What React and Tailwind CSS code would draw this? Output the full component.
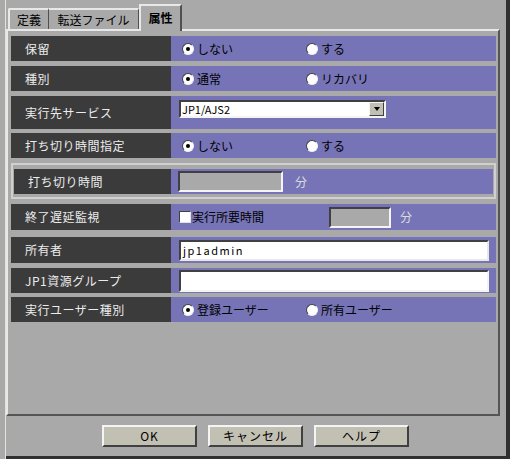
import React from 'react';

const font = { fontFamily: '"Noto Sans CJK JP", "Noto Sans", sans-serif' };

const Radio = ({ checked, label, w = '' }) => (
  <div className={`flex items-center gap-[3px] ${w}`}>
    <div className="w-[12px] h-[12px] rounded-full border border-t-[#404040] border-l-[#404040] border-r-[#f0f0f0] border-b-[#f0f0f0] bg-white flex items-center justify-center">
      {checked && <div className="w-[4px] h-[4px] rounded-full bg-black" />}
    </div>
    <span className="text-[12px] text-black leading-none">{label}</span>
  </div>
);

const Row = ({ label, h = 'h-[25px]', indent = false, children }) => (
  <div className={`flex ${h}`}>
    <div
      className={`${indent ? 'w-[157px] pl-[14px]' : 'w-[160px] pl-[14px]'} bg-[#3b3b3b] flex items-center text-[12px] tracking-[0.5px] text-[#ececec]`}
    >
      {label}
    </div>
    <div className="flex-1 bg-[#7674b6] flex items-center pl-[11px]">{children}</div>
  </div>
);

const Sunken = ({ className }) => (
  <div className={`border-2 border-t-[#404040] border-l-[#404040] border-r-[#f4f4f4] border-b-[#f4f4f4] ${className}`} />
);

const Button = ({ children, w = 'w-[95px]' }) => (
  <button className={`${w} h-[22px] bg-[#c2bfb3] border-2 border-t-[#f4f4f4] border-l-[#f4f4f4] border-r-[#404040] border-b-[#404040] text-[12px] text-black tracking-[1px] leading-none`}>
    {children}
  </button>
);

const RadioPair = ({ a, b }) => (
  <div className="flex">
    <Radio checked label={a} w="w-[124px]" />
    <Radio label={b} />
  </div>
);

export default function App() {
  return (
    <div className="w-[510px] h-[459px] bg-[#a9a9a9] flex" style={font}>
      <div className="w-[6px] border-r-[1px] border-[#e4e2d8]" />
      <div className="flex-1 flex flex-col border-b-[3px] border-[#303030] border-r-[4px] border-r-[#303030]">
        {/* タブ */}
        <div className="h-[29px] flex items-end pl-[2px] relative z-10">
          <div className="w-[41px] h-[21px] border-t-2 border-l-2 border-[#e8e8e8] border-r border-r-[#505050] flex items-center justify-center text-[12px] text-black rounded-tl-[2px]">
            定義
          </div>
          <div className="w-[90px] h-[21px] border-t-2 border-[#e8e8e8] border-r border-r-[#505050] flex items-center justify-center text-[12px] text-black">
            転送ファイル
          </div>
          <div className="w-[43px] h-[27px] -mb-[2px] bg-[#a9a9a9] border-t-2 border-l-2 border-[#e8e8e8] border-r-2 border-r-[#505050] flex items-start pt-[3px] justify-center text-[12px] font-bold text-black">
            属性
          </div>
        </div>

        {/* パネル */}
        <div className="w-[494px] h-[387px] border-2 border-t-[#e8e8e8] border-l-[#e8e8e8] border-r-[#555555] border-b-[#555555] pt-[5px] pl-[3px] pr-[2px] flex flex-col">
          <Row label="保留">
            <RadioPair a="しない" b="する" />
          </Row>
          <div className="h-[5px]" />
          <Row label="種別">
            <RadioPair a="通常" b="リカバリ" />
          </Row>
          <div className="h-[5px]" />
          <Row label="実行先サービス" h="h-[33px]">
            <div className="flex items-start self-start mt-[4px] w-[207px] h-[18px] bg-white border-2 border-t-[#404040] border-l-[#404040] border-r-[#f4f4f4] border-b-[#f4f4f4] -ml-[3px]">
              <span className="flex-1 text-[11px] leading-[14px] pl-[1px] text-black">JP1/AJS2</span>
              <div className="w-[15px] h-[14px] bg-[#c2bfb3] border border-t-[#f4f4f4] border-l-[#f4f4f4] border-r-[#404040] border-b-[#404040] flex items-center justify-center">
                <div className="w-0 h-0 border-l-[3px] border-r-[3px] border-t-[4px] border-l-transparent border-r-transparent border-t-black" />
              </div>
            </div>
          </Row>
          <div className="h-[4px]" />
          <Row label="打ち切り時間指定">
            <RadioPair a="しない" b="する" />
          </Row>
          <div className="h-[5px]" />
          <div className="h-[36px] border-2 border-[#d0d0d0] pt-[4px] pb-[3px] pl-[1px] pr-[1px]">
            <Row label="打ち切り時間" indent>
              <div className="flex items-center -ml-[4px]">
                <Sunken className="w-[105px] h-[21px] bg-[#a9a9a9]" />
                <span className="ml-[12px] text-[12px] text-[#dcdcdc]">分</span>
              </div>
            </Row>
          </div>
          <div className="h-[5px]" />
          <Row label="終了遅延監視" h="h-[26px]">
            <div className="flex items-center -ml-[3px]">
              <div className="w-[12px] h-[12px] bg-white border border-t-[#404040] border-l-[#404040] border-r-[#e0e0e0] border-b-[#e0e0e0]" />
              <span className="ml-[1px] text-[12px] text-black">実行所要時間</span>
              <Sunken className="ml-[65px] w-[62px] h-[21px] bg-[#a9a9a9]" />
              <span className="ml-[9px] text-[12px] text-[#dcdcdc]">分</span>
            </div>
          </Row>
          <div className="h-[7px]" />
          <Row label="所有者" h="h-[26px]">
            <div className="-ml-[3px] w-[310px] h-[21px] bg-white border-2 border-t-[#404040] border-l-[#404040] border-r-[#e8e8e8] border-b-[#e8e8e8] flex items-center">
              <span className="pl-[2px] text-[11px] tracking-[1.5px] text-black">jp1admin</span>
            </div>
          </Row>
          <div className="h-[5px]" />
          <Row label="JP1資源グループ">
            <Sunken className="-ml-[3px] w-[310px] h-[22px] bg-white" />
          </Row>
          <div className="h-[4px]" />
          <Row label="実行ユーザー種別">
            <RadioPair a="登録ユーザー" b="所有ユーザー" />
          </Row>
        </div>

        {/* ボタン */}
        <div className="flex pl-[96px] pt-[9px] gap-[11px]">
          <Button>OK</Button>
          <Button>キャンセル</Button>
          <Button>ヘルプ</Button>
        </div>
      </div>
    </div>
  );
}
